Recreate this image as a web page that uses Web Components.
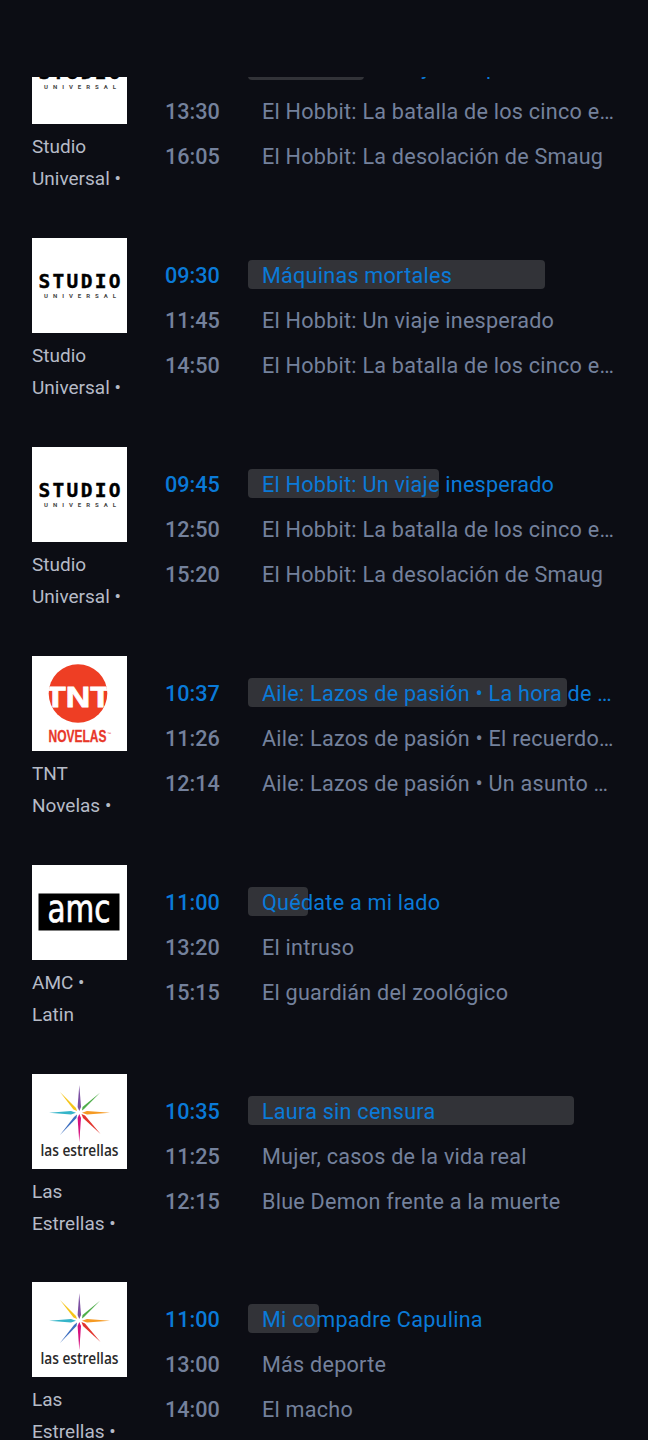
<!DOCTYPE html>
<html lang="es">
<head>
<meta charset="utf-8">
<title>Guía</title>
<style>
  html, body { margin: 0; height: 1440px; overflow: hidden; background: #0c0d14; }
  body { font-family: Roboto, "Liberation Sans", sans-serif; }
</style>
</head>
<body>
<guide-list>
  <channel-row logo="studio" name="Studio Universal •">
    <programme-line time="10:25" title="El Hobbit: Un viaje inesperado" progress="116" current></programme-line>
    <programme-line time="13:30" title="El Hobbit: La batalla de los cinco ejércitos"></programme-line>
    <programme-line time="16:05" title="El Hobbit: La desolación de Smaug"></programme-line>
  </channel-row>
  <channel-row logo="studio" name="Studio Universal •">
    <programme-line time="09:30" title="Máquinas mortales" progress="297" current></programme-line>
    <programme-line time="11:45" title="El Hobbit: Un viaje inesperado"></programme-line>
    <programme-line time="14:50" title="El Hobbit: La batalla de los cinco ejércitos"></programme-line>
  </channel-row>
  <channel-row logo="studio" name="Studio Universal •">
    <programme-line time="09:45" title="El Hobbit: Un viaje inesperado" progress="191" current></programme-line>
    <programme-line time="12:50" title="El Hobbit: La batalla de los cinco ejércitos"></programme-line>
    <programme-line time="15:20" title="El Hobbit: La desolación de Smaug"></programme-line>
  </channel-row>
  <channel-row logo="tnt" name="TNT Novelas •">
    <programme-line time="10:37" title="Aile: Lazos de pasión • La hora de la verdad" progress="319" current></programme-line>
    <programme-line time="11:26" title="Aile: Lazos de pasión • El recuerdo perdido"></programme-line>
    <programme-line time="12:14" title="Aile: Lazos de pasión • Un asunto pendiente"></programme-line>
  </channel-row>
  <channel-row logo="amc" name="AMC • Latin">
    <programme-line time="11:00" title="Quédate a mi lado" progress="60" current></programme-line>
    <programme-line time="13:20" title="El intruso"></programme-line>
    <programme-line time="15:15" title="El guardián del zoológico"></programme-line>
  </channel-row>
  <channel-row logo="estrellas" name="Las Estrellas •">
    <programme-line time="10:35" title="Laura sin censura" progress="326" current></programme-line>
    <programme-line time="11:25" title="Mujer, casos de la vida real"></programme-line>
    <programme-line time="12:15" title="Blue Demon frente a la muerte"></programme-line>
  </channel-row>
  <channel-row logo="estrellas" name="Las Estrellas •">
    <programme-line time="11:00" title="Mi compadre Capulina" progress="71" current></programme-line>
    <programme-line time="13:00" title="Más deporte"></programme-line>
    <programme-line time="14:00" title="El macho"></programme-line>
  </channel-row>
</guide-list>

<script>
// scrolled list, first row is cut by the top edge
class GuideList extends HTMLElement {
  connectedCallback() {
    this.attachShadow({ mode: 'open' });
    this.shadowRoot.innerHTML = `
      <style>
        :host {
          display: block;
          margin-top: 77px;
          height: 1363px;
          overflow: hidden;
        }
        .scroll {
          display: flex;
          flex-direction: column;
          margin-top: -47.7px;
        }
      </style>
      <div class="scroll"><slot></slot></div>
    `;
  }
}

const LOGOS = {
  studio: `
    <text x="47.5" y="50.3" text-anchor="middle" font-family="'DejaVu Sans Mono', monospace" font-weight="700" font-size="19.5" textLength="82" lengthAdjust="spacing" fill="#000" stroke="#000" stroke-width="0.4">STUDIO</text>
    <text x="48" y="59.6" text-anchor="middle" font-family="Roboto, sans-serif" font-weight="700" font-size="6" textLength="72" lengthAdjust="spacing" fill="#444">UNIVERSAL</text>
  `,
  tnt: `
    <clipPath id="c"><circle cx="46" cy="37.5" r="29.3"/></clipPath>
    <circle cx="46" cy="37.5" r="29.3" fill="#ee3e24"/>
    <text x="46" y="51" clip-path="url(#c)" text-anchor="middle" font-family="'Liberation Sans', sans-serif" font-weight="700" font-size="29" textLength="66" lengthAdjust="spacingAndGlyphs" fill="#fff" stroke="#fff" stroke-width="0.8">TNT</text>
    <text x="45.5" y="85.6" text-anchor="middle" font-family="'Liberation Sans', sans-serif" font-weight="700" font-size="16" textLength="58" lengthAdjust="spacingAndGlyphs" fill="#e8372a" stroke="#e8372a" stroke-width="0.3">NOVELAS</text>
    <text x="75" y="79" font-family="'Liberation Sans', sans-serif" font-size="4" fill="#e8372a">™</text>
  `,
  amc: `
    <rect x="6.5" y="28.5" width="81" height="37" fill="#000"/>
    <text x="47" y="56.8" text-anchor="middle" font-family="'DejaVu Sans', sans-serif" font-weight="400" font-size="36.5" textLength="63" lengthAdjust="spacingAndGlyphs" fill="#fff" stroke="#fff" stroke-width="0.7">amc</text>
  `,
  estrellas: `
    <g>
      <polygon points="47.3,11 49,33 47.3,37 45.6,33" fill="#7c4fa3"/>
      <polygon points="68,18.7 52,35 50,36.5 50.5,33" fill="#4fae4a"/>
      <polygon points="78,38.7 55,37 50,38.7 55,40.4" fill="#f59a23"/>
      <polygon points="68.5,60 51,44 49.5,40 53,41.5" fill="#e2352d"/>
      <polygon points="47.3,68 45.6,44 47.3,40 49,44" fill="#d6127f"/>
      <polygon points="28,61 42,43 45,40.5 44.5,44" fill="#3d6fc0"/>
      <polygon points="17,38.7 39,37 44,38.7 39,40.4" fill="#35b5c9"/>
      <polygon points="28,18 44,34 45,37 41.5,35.5" fill="#f6c51a"/>
    </g>
    <text x="47.5" y="82" text-anchor="middle" font-family="'Open Sans', sans-serif" font-weight="600" font-size="17" textLength="78" lengthAdjust="spacingAndGlyphs" fill="#2a2a2a">las estrellas</text>
  `
};

class ChannelRow extends HTMLElement {
  connectedCallback() {
    const logo = this.getAttribute('logo');
    this.attachShadow({ mode: 'open' });
    this.shadowRoot.innerHTML = `
      <style>
        :host {
          display: grid;
          grid-template-columns: 95px 1fr;
          column-gap: 38px;
          height: 208.85px;
          padding: 0 32px;
          box-sizing: border-box;
        }
        .logo {
          display: block;
          width: 95px;
          height: 95px;
          background: #fff;
        }
        .name {
          margin-top: 7px;
          font-size: 19px;
          line-height: 32px;
          color: #b6bbc7;
        }
        .lines {
          padding-top: 15px;
          min-width: 0;
        }
      </style>
      <div>
        <svg class="logo" viewBox="0 0 95 95">${LOGOS[logo]}</svg>
        <div class="name">${this.getAttribute('name')}</div>
      </div>
      <div class="lines"><slot></slot></div>
    `;
  }
}

class ProgrammeLine extends HTMLElement {
  connectedCallback() {
    const current = this.hasAttribute('current');
    const progress = this.getAttribute('progress');
    this.attachShadow({ mode: 'open' });
    this.shadowRoot.innerHTML = `
      <style>
        :host {
          display: grid;
          grid-template-columns: 97px 1fr;
          height: 45px;
          line-height: 45px;
          font-size: 21.6px;
          color: ${current ? '#0a7ad8' : '#74819c'};
        }
        .time { font-weight: 500; }
        .title {
          position: relative;
          min-width: 0;
          white-space: nowrap;
          letter-spacing: 0.24px;
        }
        .text {
          position: relative;
          display: block;
          overflow: hidden;
          text-overflow: ellipsis;
        }
        .bar {
          position: absolute;
          left: -14px;
          top: 7px;
          height: 29px;
          border-radius: 4px;
          background: #323338;
        }
      </style>
      <span class="time">${this.getAttribute('time')}</span>
      <div class="title">
        ${current ? `<div class="bar" style="width:${progress}px"></div>` : ''}
        <span class="text">${this.getAttribute('title')}</span>
      </div>
    `;
  }
}

customElements.define('guide-list', GuideList);
customElements.define('channel-row', ChannelRow);
customElements.define('programme-line', ProgrammeLine);
</script>
</body>
</html>
